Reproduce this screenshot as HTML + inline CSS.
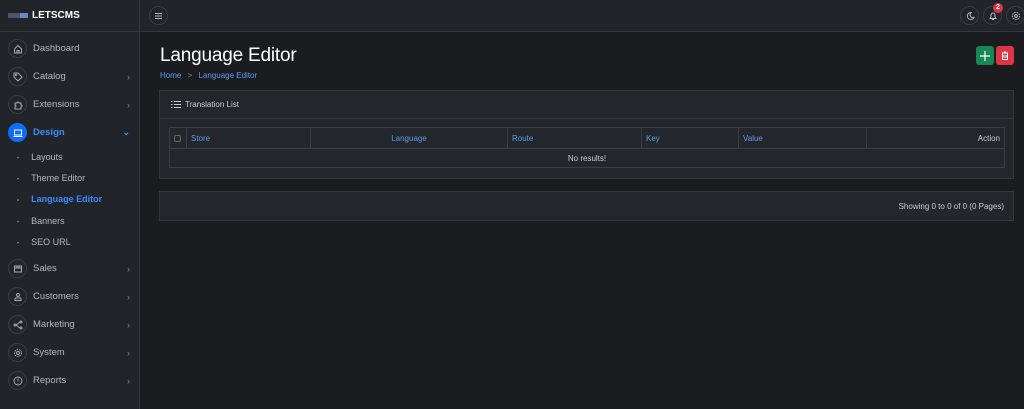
<!DOCTYPE html><html><head><style>
*{box-sizing:border-box;margin:0;padding:0}
body{width:1024px;height:409px;background:#1b1c20;font-family:"Liberation Sans",sans-serif;color:#c9cdd2;font-size:9px;position:relative;overflow:hidden}
.sb{position:absolute;left:0;top:0;width:140px;height:409px;background:#212429;border-right:1px solid #33363b}
.logo{height:32px;border-bottom:1px solid #33363b;display:flex;align-items:center;padding-left:8px;color:#fff;font-weight:bold;font-size:10px}
.logo i{display:inline-block;width:20px;height:5px;background:linear-gradient(90deg,#4a5670 60%,#6a88c8 60%);margin-right:4px}
.it{position:absolute;left:8px;display:flex;align-items:center;font-size:9.5px;color:#b5b9bf;width:126px}
.ic{width:19px;height:19px;border-radius:50%;border:1px solid #3a3d42;margin-right:6px;display:flex;align-items:center;justify-content:center}
.ar{position:absolute;right:4px;color:#888;font-size:9px}
.sub{position:absolute;left:17px;font-size:9px;color:#b5b9bf}
.sub:before{content:"•";font-size:6px;margin-right:12px;color:#888}
.top{position:absolute;left:140px;top:0;right:0;height:32px;border-bottom:1px solid #33363b;background:#212429}
.cb{position:absolute;width:19px;height:19px;border-radius:50%;border:1px solid #3a3d42;top:6px}
h1{position:absolute;left:160px;top:45px;font-size:19px;color:#fff;font-weight:normal;letter-spacing:-0.2px}
.bc{position:absolute;left:160px;top:71px;font-size:8px;color:#5b9bef}
.card{position:absolute;left:159px;width:855px;background:#23262b;border:1px solid #33363b}
table{position:absolute;left:9px;top:36px;width:836px;border-collapse:collapse}
td{border:1px solid #3a3d42;height:21px;font-size:8px;color:#5b9bef;padding:0 4px}
.btn{position:absolute;top:46px;width:18px;height:19px;border-radius:3px}
</style></head><body>
<div class="sb">
<div class="logo"><i></i>LETSCMS</div>
<div class="it" style="top:39px"><div class="ic"><svg width="10" height="10" viewBox="0 0 10 10" fill="none" stroke="#aaa"><path d="M1.5 5L5 1.5 8.5 5V9h-7z M4 9V6.5h2V9"/></svg></div>Dashboard</div>
<div class="it" style="top:67px"><div class="ic"><svg width="10" height="10" viewBox="0 0 10 10" fill="none" stroke="#aaa"><path d="M1 1h4l4 4-4 4-4-4z"/><circle cx="3" cy="3" r=".6"/></svg></div>Catalog<span class="ar">›</span></div>
<div class="it" style="top:95px"><div class="ic"><svg width="10" height="10" viewBox="0 0 10 10" fill="none" stroke="#aaa"><path d="M2 3h2a1 1 0 012 0h2v2a1 1 0 010 2v2H2V7a1 1 0 000-2z"/></svg></div>Extensions<span class="ar">›</span></div>
<div class="it" style="top:123px;color:#3d8bfd;font-weight:bold"><div class="ic" style="background:#0d6efd;border-color:#0d6efd"><svg width="10" height="10" viewBox="0 0 10 10" fill="none" stroke="#fff"><rect x="1.5" y="2" width="7" height="5"/><path d="M0.5 8.5h9"/></svg></div>Design<span class="ar" style="color:#3d8bfd">⌄</span></div>
<div class="sub" style="top:152px">Layouts</div>
<div class="sub" style="top:173px">Theme Editor</div>
<div class="sub" style="top:194px;color:#3d8bfd;font-weight:bold">Language Editor</div>
<div class="sub" style="top:216px">Banners</div>
<div class="sub" style="top:237px">SEO URL</div>
<div class="it" style="top:259px"><div class="ic"><svg width="10" height="10" viewBox="0 0 10 10" fill="none" stroke="#aaa"><rect x="1.5" y="2" width="7" height="6"/><path d="M1.5 4h7M4 2v2M6 2v2"/></svg></div>Sales<span class="ar">›</span></div>
<div class="it" style="top:287px"><div class="ic"><svg width="10" height="10" viewBox="0 0 10 10" fill="none" stroke="#aaa"><circle cx="5" cy="3" r="1.5"/><path d="M2 8.5h6V7a1 1 0 00-1-1H3a1 1 0 00-1 1z"/></svg></div>Customers<span class="ar">›</span></div>
<div class="it" style="top:315px"><div class="ic"><svg width="10" height="10" viewBox="0 0 10 10" fill="none" stroke="#aaa"><circle cx="2" cy="5" r="1"/><circle cx="8" cy="2" r="1"/><circle cx="8" cy="8" r="1"/><path d="M3 5l4-3M3 5l4 3"/></svg></div>Marketing<span class="ar">›</span></div>
<div class="it" style="top:343px"><div class="ic"><svg width="10" height="10" viewBox="0 0 10 10" fill="none" stroke="#aaa"><circle cx="5" cy="5" r="1.5"/><circle cx="5" cy="5" r="3.5" stroke-dasharray="1.5 1"/></svg></div>System<span class="ar">›</span></div>
<div class="it" style="top:371px"><div class="ic"><svg width="10" height="10" viewBox="0 0 10 10" fill="none" stroke="#aaa"><circle cx="5" cy="5" r="4"/><path d="M5 2.5v3M5 7v.6"/></svg></div>Reports<span class="ar">›</span></div>
</div>
<div class="top">
<div class="cb" style="left:9px;display:flex;align-items:center;justify-content:center"><svg width="9" height="8"><path d="M1 1.5h7M1 4h7M1 6.5h7" stroke="#bbb"/></svg></div>
<div class="cb" style="left:820px;display:flex;align-items:center;justify-content:center"><svg width="10" height="10" viewBox="0 0 10 10"><path d="M6 1.5a3.5 3.5 0 103 5 3 3 0 01-3-5z" fill="none" stroke="#bbb"/></svg></div>
<div class="cb" style="left:843px;display:flex;align-items:center;justify-content:center"><svg width="10" height="10" viewBox="0 0 10 10" fill="none" stroke="#bbb"><path d="M2 7.5h6L7 6V4a2 2 0 00-4 0v2zM4 8.5h2"/></svg></div>
<div style="position:absolute;left:853px;top:3px;width:10px;height:10px;border-radius:50%;background:#dc3545;color:#fff;font-size:7px;text-align:center;line-height:10px;font-weight:bold">2</div>
<div class="cb" style="left:866px;display:flex;align-items:center;justify-content:center"><svg width="10" height="10" viewBox="0 0 10 10" fill="none" stroke="#bbb"><circle cx="5" cy="5" r="1.4"/><circle cx="5" cy="5" r="3.6" stroke-dasharray="1.5 1"/></svg></div>
</div>
<h1>Language Editor</h1>
<div class="bc">Home <span style="color:#888;margin:0 4px">&gt;</span> Language Editor</div>
<div class="btn" style="left:976px;background:#198754;display:flex;align-items:center;justify-content:center"><svg width="10" height="10"><path d="M5 0v10M0 5h10" stroke="#fff" stroke-width="1.2"/></svg></div>
<div class="btn" style="left:996px;background:#dc3545;display:flex;align-items:center;justify-content:center"><svg width="8" height="9" viewBox="0 0 8 9" fill="none" stroke="#fff"><path d="M1 2h6M3 1h2M1.5 2v6.5h5V2M3 4v3M5 4v3"/></svg></div>
<div class="card" style="top:90px;height:89px">
<div style="height:28px;border-bottom:1px solid #33363b;display:flex;align-items:center;padding-left:11px;font-size:8px;color:#c9cdd2"><svg width="10" height="7" style="margin-right:4px"><path d="M0 .5h1.5M3 .5h7M0 3.5h1.5M3 3.5h7M0 6.5h1.5M3 6.5h7" stroke="#ccc"/></svg>Translation List</div>
<table><tr><td style="width:17px"><div style="width:7px;height:7px;border:1px solid #666;border-radius:2px"></div></td><td style="width:124px">Store</td><td style="width:197px;text-align:center">Language</td><td style="width:134px">Route</td><td style="width:97px">Key</td><td style="width:128px">Value</td><td style="text-align:right;color:#c9cdd2">Action</td></tr>
<tr><td colspan="7" style="text-align:center;color:#c9cdd2;height:19px">No results!</td></tr></table>
</div>
<div class="card" style="top:191px;height:30px"><div style="position:absolute;right:9px;top:10px;font-size:8px">Showing 0 to 0 of 0 (0 Pages)</div></div>
</body></html>
